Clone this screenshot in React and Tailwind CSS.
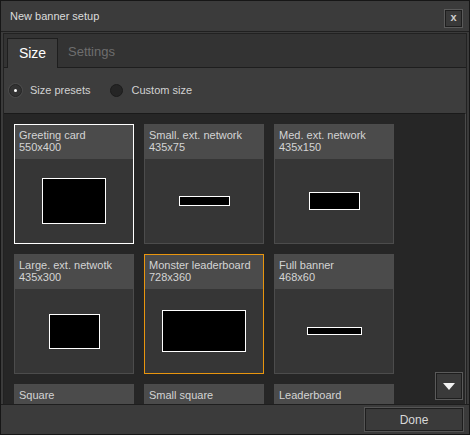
const presets = [
  { name: 'Greeting card', size: '550x400', w: 64, h: 46, state: 'selected' },
  { name: 'Small. ext. network', size: '435x75', w: 51, h: 10 },
  { name: 'Med. ext. network', size: '435x150', w: 51, h: 18 },
  { name: 'Large. ext. netwotk', size: '435x300', w: 51, h: 35 },
  { name: 'Monster leaderboard', size: '728x360', w: 84, h: 42, state: 'hover' },
  { name: 'Full banner', size: '468x60', w: 55, h: 8 },
  { name: 'Square', size: '', w: 40, h: 40 },
  { name: 'Small square', size: '', w: 34, h: 34 },
  { name: 'Leaderboard', size: '', w: 84, h: 10 },
];

const PresetCard = ({ preset }) => {
  const border =
    preset.state === 'selected'
      ? 'border-white'
      : preset.state === 'hover'
      ? 'border-[#e8950e]'
      : 'border-[#4c4c4c]';
  return (
    <div className={`w-[120px] h-[120px] flex flex-col border ${border} bg-[#363636]`}>
      <div className="h-[34px] bg-[#4b4b4b] px-[4px] pt-[4px] text-[11px] leading-[12px] text-[#d4d4d4]">
        <div>{preset.name}</div>
        {preset.size && <div>{preset.size}</div>}
      </div>
      <div className="flex-1 flex items-center justify-center">
        <div
          className="bg-black border border-white"
          style={{ width: preset.w, height: preset.h }}
        />
      </div>
    </div>
  );
};

const App = () => {
  return (
    <div className="w-[470px] h-[435px] bg-[#3b3b3b] border border-[#161616] flex flex-col font-['Liberation_Sans',_Arial,_sans-serif] text-[#d8d8d8] overflow-hidden">
      {/* Title bar */}
      <div className="h-[31px] shrink-0 flex items-center justify-between pl-[9px] pr-[6px] border-b border-[#202020]">
        <span className="text-[11px] text-[#dcdcdc]">New banner setup</span>
        <div className="mt-[4px] w-[19px] h-[19px] border border-[#5a5a5a] flex items-center justify-center">
          <div className="w-[17px] h-[17px] border border-[#1e1e1e] bg-[#393939] flex items-center justify-center text-[11px] font-bold text-[#cfcfcf] leading-none pb-[2px]">
            x
          </div>
        </div>
      </div>

      {/* Tabbed panel */}
      <div className="flex-1 min-h-0 flex flex-col mx-[2px] mt-[1px] border border-[#222] border-b-0">
        <div className="h-[34px] shrink-0 bg-[#333] border-b border-[#1e1e1e] flex items-end pl-[3px]">
          <div className="w-[51px] h-[30px] bg-[#3d3d3d] border border-[#1e1e1e] border-b-0 -mb-px flex items-center justify-center text-[14px] text-white">
            Size
          </div>
          <div className="h-[30px] flex items-center pl-[10px] text-[13px] text-[#6e6e6e]">Settings</div>
        </div>

        <div className="h-[45px] shrink-0 bg-[#3d3d3d] flex items-center pl-[5px] text-[11px] text-[#d2d2d2]">
          <div className="w-[13px] h-[13px] rounded-full border border-[#262626] bg-[#333] flex items-center justify-center shadow-[0_0_0_1px_#4a4a4a]">
            <div className="w-[3px] h-[3px] rounded-full bg-white" />
          </div>
          <span className="ml-[8px]">Size presets</span>
          <div className="ml-[19px] w-[13px] h-[13px] rounded-full border border-[#1c1c1c] bg-[#252525]" />
          <span className="ml-[9px]">Custom size</span>
        </div>

        <div className="flex-1 min-h-0 relative bg-[#262626] border-t border-[#1a1a1a] border-r border-r-[#4a4a4a] overflow-hidden">
          <div className="grid grid-cols-[120px_120px_120px] gap-x-[10px] gap-y-[10px] pl-[10px] pt-[10px]">
            {presets.map((p) => (
              <PresetCard key={p.name} preset={p} />
            ))}
          </div>
          <div className="absolute right-[2px] bottom-[4px] w-[28px] h-[28px] border border-[#5a5a5a] flex items-center justify-center">
            <div className="w-[26px] h-[26px] border border-[#1e1e1e] bg-[#3a3a3a] flex items-center justify-center">
              <svg width="12" height="7" viewBox="0 0 12 7">
                <path d="M0 0 H12 L6 7 Z" fill="#f2f2f2" />
              </svg>
            </div>
          </div>
        </div>
      </div>

      {/* Footer */}
      <div className="h-[30px] shrink-0 border-t border-[#1e1e1e] flex items-center justify-end pr-[6px]">
        <div className="w-[98px] h-[23px] border border-[#1e1e1e] shadow-[0_0_0_1px_#555] bg-[#3a3a3a] flex items-center justify-center text-[12px] text-[#d8d8d8]">
          Done
        </div>
      </div>
    </div>
  );
};

export default App;
